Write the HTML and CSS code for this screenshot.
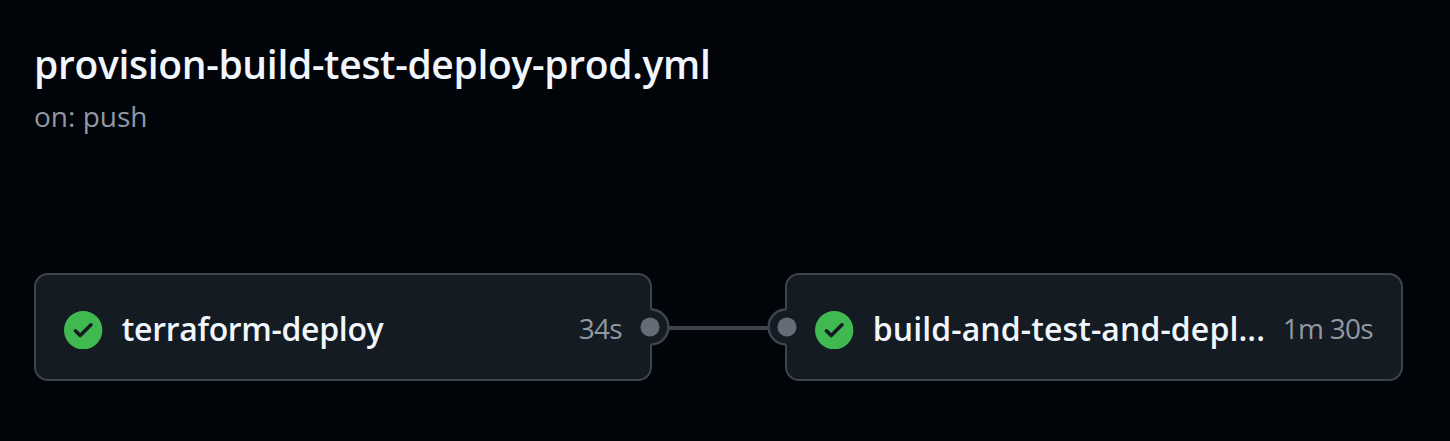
FILE: index.html
```html
<!DOCTYPE html>
<html lang="en">
<head>
<meta charset="utf-8">
<title>Workflow run</title>
<link rel="stylesheet" href="styles.css">
</head>
<body>
<main class="workflow">
  <header class="header">
    <h1 class="title">provision-build-test-deploy-prod.yml</h1>
    <p class="trigger">on: push</p>
  </header>
  <div class="graph">
    <article class="job">
      <svg class="status" viewBox="0 0 16 16"><path d="M8 16A8 8 0 1 1 8 0a8 8 0 0 1 0 16Zm3.78-9.72a.751.751 0 0 0-.018-1.042.751.751 0 0 0-1.042-.018L6.75 9.19 5.28 7.72a.751.751 0 0 0-1.042.018.751.751 0 0 0-.018 1.042l2 2a.75.75 0 0 0 1.06 0Z"/></svg>
      <span class="name name-first">terraform-deploy</span>
      <span class="time">34s</span>
      <svg class="port port-out" viewBox="0 0 40 40"><circle class="port-fill" cx="20" cy="20" r="17.5"/><path class="port-ring" d="M21 2.6A17.4 17.4 0 0 1 21 37.4"/><circle class="port-dot" cx="20" cy="20" r="9.5"/></svg>
    </article>
    <div class="connector"></div>
    <article class="job">
      <svg class="port port-in" viewBox="0 0 40 40"><circle class="port-fill" cx="20" cy="20" r="17.5"/><path class="port-ring" d="M19 2.6A17.4 17.4 0 0 0 19 37.4"/><circle class="port-dot" cx="20" cy="20" r="9.5"/></svg>
      <svg class="status" viewBox="0 0 16 16"><path d="M8 16A8 8 0 1 1 8 0a8 8 0 0 1 0 16Zm3.78-9.72a.751.751 0 0 0-.018-1.042.751.751 0 0 0-1.042-.018L6.75 9.19 5.28 7.72a.751.751 0 0 0-1.042.018.751.751 0 0 0-.018 1.042l2 2a.75.75 0 0 0 1.06 0Z"/></svg>
      <span class="name name-second">build-and-test-and-depl...</span>
      <span class="time">1m 30s</span>
    </article>
  </div>
</main>
</body>
</html>
```
FILE: styles.css
```css
* { box-sizing: border-box; }
body {
  margin: 0;
  height: 441px;
  overflow: hidden;
  background: #010409;
  color: #f0f6fc;
  font-family: "Segoe UI", "Open Sans", "Noto Sans", sans-serif;
}
.workflow { padding: 37px 46px 0 34px; }
.header { height: 236px; }
.title {
  margin: 0;
  font-size: 39px;
  line-height: 54px;
  font-weight: 600;
  letter-spacing: -0.32px;
  white-space: nowrap;
}
.trigger {
  margin: 4px 0 0;
  font-size: 28px;
  line-height: 42px;
  color: #9198a1;
}
.graph { display: flex; align-items: flex-start; }
.job {
  position: relative;
  display: flex;
  align-items: center;
  width: 618px;
  height: 108px;
  padding: 6px 28px 0 28.4px;
  border: 2px solid #3d444d;
  border-radius: 14px;
  background: #151b23;
  white-space: nowrap;
}
.status { flex: none; width: 38.4px; height: 38.4px; fill: #3fb950; }
.name { margin-left: 19px; padding-bottom: 2px; font-size: 32px; line-height: 44px; font-weight: 600; }
.name-first { letter-spacing: -0.33px; }
.name-second { letter-spacing: 0.1px; }
.time { margin-left: auto; padding-bottom: 5px; font-size: 28px; line-height: 40px; letter-spacing: -0.7px; color: #9198a1; }
.connector { width: 133px; height: 4px; margin-top: 53px; background: #3d444d; }
.port { position: absolute; top: 32px; width: 40px; height: 40px; z-index: 1; }
.port-out { right: -20px; }
.port-in { left: -20px; }
.port-fill { fill: #151b23; }
.port-ring { fill: none; stroke: #3d444d; stroke-width: 2.5; }
.port-dot { fill: #656c76; }
```
